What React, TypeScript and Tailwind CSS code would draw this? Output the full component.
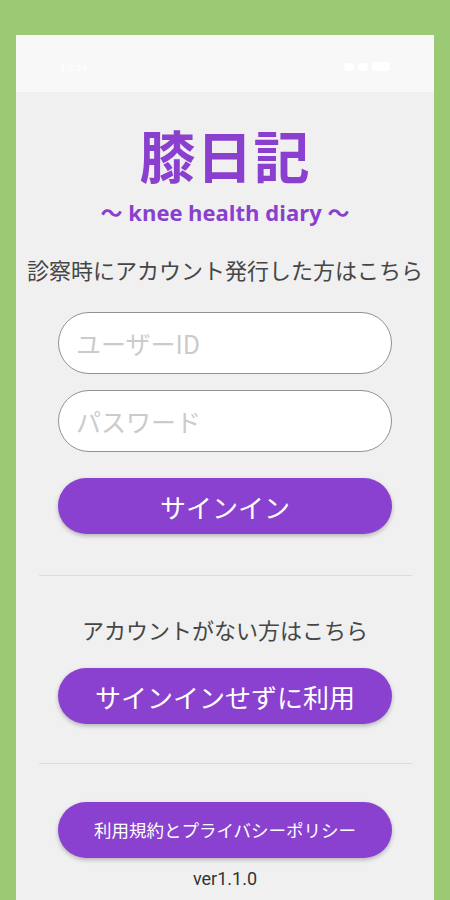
import React from 'react';

const jp = { fontFamily: '"Noto Sans CJK JP", "Noto Sans", sans-serif' };

const PillButton = ({ label, size }: { label: string; size: string }) => (
  <button
    className={`w-[334px] h-[56px] rounded-full bg-[#8a41d0] text-white shadow-[0_2px_4px_rgba(0,0,0,0.25)] flex items-center justify-center ${size}`}
  >
    {label}
  </button>
);

const App: React.FC = () => {
  return (
    <div className="min-h-[900px] w-[450px] bg-[#9cc974] pt-[35px] px-[16px]" style={jp}>
      <div className="h-[865px] bg-[#f0f0f0] flex flex-col">
        {/* status bar, white glyphs on near-white */}
        <div className="h-[57px] bg-[#f8f8f8] flex items-center justify-between px-[44px] pt-[6px]">
          <div className="flex items-center gap-[6px]">
            <span className="text-[11px] text-white">12:34</span>
          </div>
          <div className="flex items-center gap-[4px]">
            <div className="w-[10px] h-[8px] bg-white rounded-sm" />
            <div className="w-[10px] h-[8px] bg-white rounded-sm" />
            <div className="w-[18px] h-[9px] bg-white rounded-sm" />
          </div>
        </div>

        <div className="flex flex-col items-center">
          <h1 className="mt-[30px] text-[56px] leading-[64px] font-bold text-[#8a3fcf] tracking-[1px]">膝日記</h1>
          <p
            className="mt-[12px] text-[22px] leading-[29px] font-bold text-[#8a3fcf]"
            style={{ fontFamily: '"Open Sans", "Noto Sans CJK JP", sans-serif' }}
          >
            〜 knee health diary 〜
          </p>
          <p className="mt-[27px] text-[22px] leading-[30px] text-[#464646]">診察時にアカウント発行した方はこちら</p>

          <input
            className="mt-[28px] w-[334px] h-[62px] rounded-full bg-white border border-[#929292] pl-[17px] pr-[18px] text-[25px] placeholder:text-[#cbcbcb] outline-none"
            placeholder="ユーザーID"
          />
          <input
            className="mt-[16px] w-[334px] h-[62px] rounded-full bg-white border border-[#929292] pl-[17px] pr-[18px] text-[25px] placeholder:text-[#cbcbcb] outline-none"
            placeholder="パスワード"
            type="text"
          />

          <div className="mt-[26px]">
            <PillButton label="サインイン" size="text-[26px]" />
          </div>

          <div className="mt-[41px] w-[373px] h-px bg-[#dddddd]" />

          <p className="mt-[38px] text-[22px] leading-[30px] text-[#464646]">アカウントがない方はこちら</p>

          <div className="mt-[24px]">
            <PillButton label="サインインせずに利用" size="text-[26px]" />
          </div>

          <div className="mt-[39px] w-[373px] h-px bg-[#dddddd]" />

          <div className="mt-[38px]">
            <PillButton label="利用規約とプライバシーポリシー" size="text-[17.5px]" />
          </div>

          <p className="mt-[11px] text-[18px] leading-[20px] text-[#333333]" style={{ fontFamily: 'Roboto, "Noto Sans", sans-serif' }}>
            ver1.1.0
          </p>
        </div>
      </div>
    </div>
  );
};

export default App;
